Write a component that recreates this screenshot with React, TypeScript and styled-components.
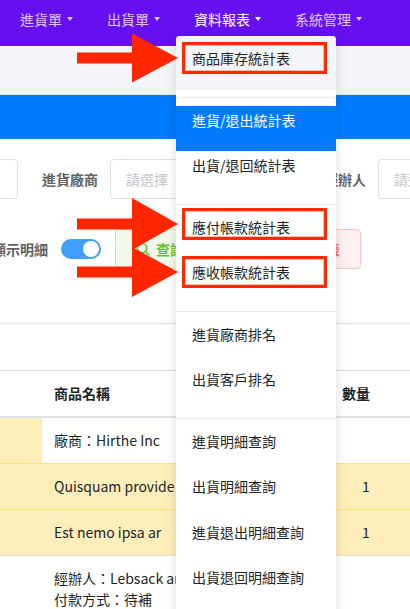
import React from 'react';
import styled, { createGlobalStyle, css } from 'styled-components';

const GlobalStyle = createGlobalStyle`
  html, body {
    margin: 0;
    padding: 0;
    overflow: hidden;
    background: #ffffff;
  }
  body {
    font-family: "Noto Sans CJK TC", "Noto Sans", sans-serif;
    font-size: 14px;
    color: #212529;
  }
`;

const Page = styled.div`
  position: relative;
  width: 410px;
  height: 609px;
  overflow: hidden;
  background: #fff;
`;

const NavBar = styled.nav`
  display: flex;
  align-items: flex-start;
  height: 46px;
  padding: 8px 0 0 3px;
  box-sizing: border-box;
  background: #6610f2;
`;

const NavItem = styled.div<{ $active?: boolean }>`
  display: flex;
  align-items: center;
  padding: 0 17px;
  font-size: 14px;
  line-height: 22px;
  color: ${(p) => (p.$active ? '#ffffff' : 'rgba(255, 255, 255, 0.78)')};

  &::after {
    content: '';
    margin-left: 5px;
    border-left: 3.5px solid transparent;
    border-right: 3.5px solid transparent;
    border-top: 4px solid currentColor;
  }
`;

const SubBar = styled.div`
  height: 48px;
  background: #f4f5f8;
  border-bottom: 1px solid #e3e6ea;
`;

const BlueBar = styled.div`
  height: 44px;
  background: #007bff;
`;

const Form = styled.div`
  display: flex;
  flex-direction: column;
  gap: 30px;
  padding-top: 20px;
`;

const FormRow = styled.div<{ $shift: number }>`
  display: flex;
  align-items: center;
  height: 40px;
  margin-left: ${(p) => p.$shift}px;
  white-space: nowrap;
`;

const Label = styled.label`
  flex: none;
  width: 92px;
  box-sizing: border-box;
  padding-right: 12px;
  text-align: right;
  font-size: 14px;
  font-weight: 700;
  color: #606266;
`;

const Select = styled.div<{ $width: number }>`
  flex: none;
  width: ${(p) => p.$width}px;
  height: 40px;
  box-sizing: border-box;
  border: 1px solid #dcdfe6;
  border-radius: 4px;
  padding-left: 15px;
  display: flex;
  align-items: center;
  color: #c0c4cc;
  font-size: 14px;
  background: #fff;
`;

const Switch = styled.div`
  flex: none;
  width: 40px;
  height: 20px;
  margin-left: 1px;
  border-radius: 10px;
  background: #409eff;
  position: relative;

  &::after {
    content: '';
    position: absolute;
    top: 2px;
    right: 2px;
    width: 16px;
    height: 16px;
    border-radius: 50%;
    background: #fff;
  }
`;

const tones = {
  success: css`
    color: #67c23a;
    background: #f0f9eb;
    border-color: #c2e7b0;
  `,
  danger: css`
    color: #f56c6c;
    background: #fef0f0;
    border-color: #fbc4c4;
  `,
};

const Button = styled.button<{ $tone: 'success' | 'danger'; $gap: number }>`
  flex: none;
  display: flex;
  align-items: center;
  gap: 6px;
  height: 40px;
  margin-left: ${(p) => p.$gap}px;
  padding: 0 20px;
  border: 1px solid;
  border-radius: 4px;
  font-family: inherit;
  font-size: 14px;
  font-weight: 700;
  ${(p) => tones[p.$tone]}
`;

const Toolbar = styled.div`
  height: 46px;
  margin-top: 54px;
  border-top: 1px solid #dee2e6;
`;

const Table = styled.table`
  width: 410px;
  table-layout: fixed;
  border-collapse: collapse;
  font-size: 14px;
  line-height: 21px;
`;

const Th = styled.th<{ $w: number }>`
  width: ${(p) => p.$w}px;
  box-sizing: border-box;
  padding: 12px;
  text-align: left;
  font-weight: 700;
  border-top: 1px solid #dee2e6;
  border-bottom: 2px solid #dee2e6;
  white-space: nowrap;
  overflow: hidden;
`;

const Row = styled.tr<{ $warn?: boolean }>`
  background: ${(p) => (p.$warn ? '#ffeeba' : '#ffffff')};

  td {
    border-top: 1px solid ${(p) => (p.$warn ? '#ffdf7e' : '#dee2e6')};
  }
`;

const Td = styled.td<{ $warn?: boolean; $center?: boolean }>`
  padding: 12px;
  vertical-align: top;
  white-space: nowrap;
  overflow: hidden;
  text-align: ${(p) => (p.$center ? 'center' : 'left')};
  ${(p) => p.$warn && 'background: #ffeeba;'}
`;

const Menu = styled.div`
  position: absolute;
  top: 36px;
  left: 176px;
  width: 160px;
  height: 600px;
  background: #fff;
  border-radius: 4px 4px 0 0;
  box-shadow: 0 2px 12px rgba(0, 0, 0, 0.14);
  z-index: 5;
`;

const MenuItem = styled.div<{ $active?: boolean; $hover?: boolean; $first?: boolean }>`
  padding: ${(p) => (p.$first ? '11px' : '3px')} 16px 20px;
  font-size: 14px;
  line-height: 22.5px;
  white-space: nowrap;
  color: ${(p) => (p.$active ? '#fff' : '#212529')};
  background: ${(p) => (p.$active ? '#007bff' : p.$hover ? '#f4f5f8' : 'transparent')};
  border-radius: ${(p) => (p.$first ? '4px 4px 0 0' : '0')};
`;

const MenuDivider = styled.div`
  height: 1px;
  margin: 7.5px 0;
  background: #e9ecef;
`;

const Mark = styled.div<{ $top: number }>`
  position: absolute;
  left: 182px;
  top: ${(p) => p.$top}px;
  width: 145px;
  height: 32px;
  box-sizing: border-box;
  border: 3px solid #ff2a00;
  box-shadow: inset 0 0 0 1px rgba(255, 140, 120, 0.6);
  z-index: 6;
`;

const ArrowLayer = styled.svg`
  position: absolute;
  top: 0;
  left: 0;
  z-index: 7;
  pointer-events: none;
`;

const SearchIcon = () => (
  <svg width="14" height="14" viewBox="0 0 14 14" fill="none" stroke="#67c23a" strokeWidth="1.6">
    <circle cx="6" cy="6" r="4.8" />
    <line x1="9.6" y1="9.6" x2="13" y2="13" strokeLinecap="round" />
  </svg>
);

const arrows = [
  { y: 58, half: 24.5 },
  { y: 224, half: 26 },
  { y: 272, half: 25 },
];

const menu: (string | null)[] = [
  '商品庫存統計表',
  null,
  '進貨/退出統計表',
  '出貨/退回統計表',
  null,
  '應付帳款統計表',
  '應收帳款統計表',
  null,
  '進貨廠商排名',
  '出貨客戶排名',
  null,
  '進貨明細查詢',
  '出貨明細查詢',
  '進貨退出明細查詢',
  '出貨退回明細查詢',
];

export default function App() {
  return (
    <Page>
      <GlobalStyle />
      <NavBar>
        <NavItem>進貨單</NavItem>
        <NavItem>出貨單</NavItem>
        <NavItem $active>資料報表</NavItem>
        <NavItem>系統管理</NavItem>
      </NavBar>
      <SubBar />
      <BlueBar />

      <Form>
        <FormRow $shift={-158}>
          <Select $width={176}>請選擇</Select>
          <Label>進貨廠商</Label>
          <Select $width={176}>請選擇</Select>
          <Label>經辦人</Label>
          <Select $width={176}>請選擇</Select>
        </FormRow>
        <FormRow $shift={-32}>
          <Label>顯示明細</Label>
          <Switch />
          <Button $tone="success" $gap={14}>
            <SearchIcon />
            查詢
          </Button>
          <Button $tone="danger" $gap={58}>匯出報表</Button>
        </FormRow>
      </Form>

      <Toolbar />
      <Table>
        <thead>
          <tr>
            <Th $w={42} />
            <Th $w={288}>商品名稱</Th>
            <Th $w={72}>數量</Th>
            <Th $w={8} />
          </tr>
        </thead>
        <tbody>
          <Row>
            <Td $warn />
            <Td>廠商：Hirthe Inc</Td>
            <Td />
            <Td />
          </Row>
          <Row $warn>
            <Td />
            <Td>Quisquam provide</Td>
            <Td $center>1</Td>
            <Td />
          </Row>
          <Row $warn>
            <Td />
            <Td>Est nemo ipsa ar</Td>
            <Td $center>1</Td>
            <Td />
          </Row>
          <Row>
            <Td />
            <Td>
              經辦人：Lebsack and Sons
              <br />
              付款方式：待補
            </Td>
            <Td />
            <Td />
          </Row>
        </tbody>
      </Table>

      <Menu>
        {menu.map((label, i) =>
          label === null ? (
            <MenuDivider key={i} />
          ) : (
            <MenuItem key={i} $first={i === 0} $hover={i === 0} $active={i === 2}>
              {label}
            </MenuItem>
          ),
        )}
      </Menu>

      <Mark $top={42} />
      <Mark $top={208} />
      <Mark $top={256} />

      <ArrowLayer width="410" height="609" viewBox="0 0 410 609">
        {arrows.map((a) => (
          <polygon
            key={a.y}
            fill="#ff2600"
            points={`77,${a.y - 5.5} 132,${a.y - 5.5} 132,${a.y - a.half} 178,${a.y} 132,${a.y + a.half} 132,${a.y + 5.5} 77,${a.y + 5.5}`}
          />
        ))}
      </ArrowLayer>
    </Page>
  );
}
